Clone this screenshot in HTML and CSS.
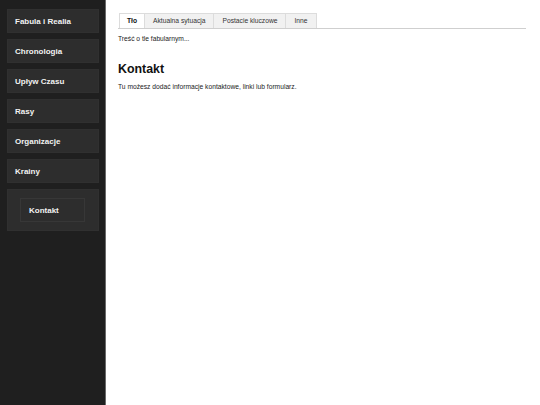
FILE: index.html
```html
<!DOCTYPE html>
<html lang="pl">
<head>
<meta charset="utf-8">
<link rel="stylesheet" href="styles.css">
</head>
<body>
<aside class="sidebar">
  <a class="nav-item">Fabula i Realia</a>
  <a class="nav-item">Chronologia</a>
  <a class="nav-item">Upływ Czasu</a>
  <a class="nav-item">Rasy</a>
  <a class="nav-item">Organizacje</a>
  <a class="nav-item">Krainy</a>
  <div class="nav-group">
    <a class="nav-sub">Kontakt</a>
  </div>
</aside>
<main class="main">
  <div class="tabs">
    <span class="tab active">Tło</span>
    <span class="tab">Aktualna sytuacja</span>
    <span class="tab">Postacie kluczowe</span>
    <span class="tab">Inne</span>
  </div>
  <p class="tab-text">Treść o tle fabularnym...</p>
  <h2 class="heading">Kontakt</h2>
  <p class="text">Tu możesz dodać informacje kontaktowe, linki lub formularz.</p>
</main>
</body>
</html>
```
FILE: styles.css
```css
html, body {
  margin: 0;
  padding: 0;
  height: 405px;
}
body {
  display: flex;
  font-family: "Liberation Sans", Arial, sans-serif;
  background: #ffffff;
  color: #111;
}
.sidebar {
  width: 98px;
  padding: 9px 0 0 7px;
  background: #1f1f1f;
  border-right: 1px solid #6a6a6a;
  display: flex;
  flex-direction: column;
  gap: 6px;
  box-sizing: content-box;
  height: 396px;
}
.nav-item {
  display: flex;
  align-items: center;
  width: 92px;
  height: 24px;
  box-sizing: border-box;
  padding-left: 7px;
  background: #2d2d2d;
  border: 1px solid #303030;
  color: #f2f2f2;
  font-weight: bold;
  font-size: 8px;
}
.nav-group {
  width: 92px;
  height: 42px;
  box-sizing: border-box;
  background: #2d2d2d;
  border: 1px solid #303030;
  padding: 8px 0 0 12px;
}
.nav-sub {
  display: flex;
  align-items: center;
  width: 65px;
  height: 24px;
  box-sizing: border-box;
  padding-left: 8px;
  border: 1px solid #373737;
  color: #f2f2f2;
  font-weight: bold;
  font-size: 8px;
}
.main {
  flex: 1;
  padding: 13px 14px 0 12px;
}
.tabs {
  display: flex;
  border-bottom: 1px solid #cfcfcf;
  padding-left: 1px;
}
.tab {
  font-size: 6.7px;
  line-height: 14px;
  padding: 0 8px;
  background: #f1f1f1;
  border: 1px solid #dcdcdc;
  border-bottom: none;
  margin-right: -1px;
  color: #333;
}
.tab.active {
  background: #fff;
  font-weight: bold;
  color: #111;
  padding: 0 7px;
}
.tab-text {
  margin: 5px 0 0 0;
  font-size: 6.7px;
  line-height: 9px;
  color: #222;
}
.heading {
  margin: 19px 0 0 0;
  font-size: 12.4px;
  line-height: 14px;
  font-weight: bold;
  color: #111;
}
.text {
  margin: 6px 0 0 0;
  font-size: 6.7px;
  line-height: 9px;
  color: #222;
}
```
